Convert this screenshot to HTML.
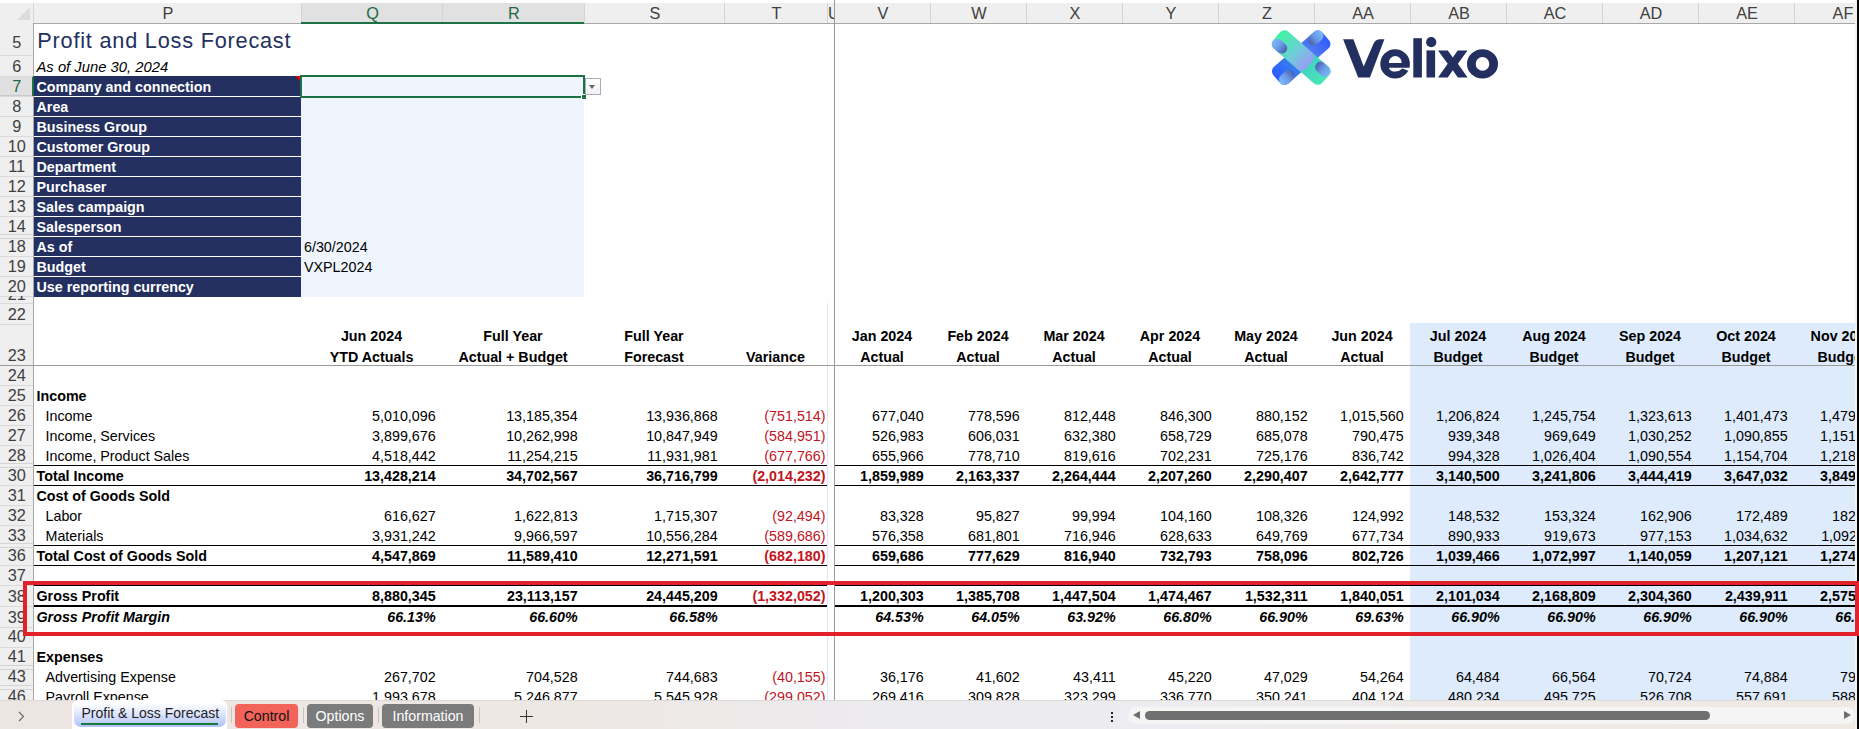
<!DOCTYPE html>
<html><head><meta charset="utf-8"><style>
html,body{margin:0;padding:0;}
body{width:1859px;height:729px;position:relative;overflow:hidden;background:#fff;font-family:"Liberation Sans", sans-serif;}
div,span,svg{position:absolute;}
span{line-height:1;white-space:nowrap;}
</style></head><body>
<div id="sheet" style="left:0;top:0;width:1855px;height:700px;overflow:hidden;">
<div style="left:1410px;top:323px;width:480px;height:377px;background:#DDEBFC"></div>
<div style="left:34px;top:76px;width:267px;height:221px;background:#243060"></div>
<div style="left:301px;top:76px;width:283px;height:221px;background:#EEF5FD"></div>
<div style="left:34px;top:96px;width:267px;height:1px;background:#FFFFFF"></div>
<div style="left:34px;top:116px;width:267px;height:1px;background:#FFFFFF"></div>
<div style="left:34px;top:136px;width:267px;height:1px;background:#FFFFFF"></div>
<div style="left:34px;top:156px;width:267px;height:1px;background:#FFFFFF"></div>
<div style="left:34px;top:176px;width:267px;height:1px;background:#FFFFFF"></div>
<div style="left:34px;top:196px;width:267px;height:1px;background:#FFFFFF"></div>
<div style="left:34px;top:216px;width:267px;height:1px;background:#FFFFFF"></div>
<div style="left:34px;top:236px;width:267px;height:1px;background:#FFFFFF"></div>
<div style="left:34px;top:256px;width:267px;height:1px;background:#FFFFFF"></div>
<div style="left:34px;top:276px;width:267px;height:1px;background:#FFFFFF"></div>
<span style="left:37.30px;top:30.43px;font-size:21.7px;color:#23305F;letter-spacing:0.79px">Profit and Loss Forecast</span>
<span style="left:36.50px;top:59.67px;font-size:14.8px;font-style:italic;color:#000">As of June 30, 2024</span>
<span style="left:36.50px;top:80.00px;font-size:14.3px;font-weight:bold;color:#fff">Company and connection</span>
<span style="left:36.50px;top:100.00px;font-size:14.3px;font-weight:bold;color:#fff">Area</span>
<span style="left:36.50px;top:120.00px;font-size:14.3px;font-weight:bold;color:#fff">Business Group</span>
<span style="left:36.50px;top:140.00px;font-size:14.3px;font-weight:bold;color:#fff">Customer Group</span>
<span style="left:36.50px;top:160.00px;font-size:14.3px;font-weight:bold;color:#fff">Department</span>
<span style="left:36.50px;top:180.00px;font-size:14.3px;font-weight:bold;color:#fff">Purchaser</span>
<span style="left:36.50px;top:200.00px;font-size:14.3px;font-weight:bold;color:#fff">Sales campaign</span>
<span style="left:36.50px;top:220.00px;font-size:14.3px;font-weight:bold;color:#fff">Salesperson</span>
<span style="left:36.50px;top:240.00px;font-size:14.3px;font-weight:bold;color:#fff">As of</span>
<span style="left:36.50px;top:260.00px;font-size:14.3px;font-weight:bold;color:#fff">Budget</span>
<span style="left:36.50px;top:280.00px;font-size:14.3px;font-weight:bold;color:#fff">Use reporting currency</span>
<span style="left:304.00px;top:240.10px;font-size:14.3px;color:#000">6/30/2024</span>
<span style="left:304.00px;top:260.10px;font-size:14.3px;color:#000">VXPL2024</span>
<div style="left:295px;top:76px;width:0;height:0;border-top:6px solid #E00000;border-left:6px solid transparent;"></div>
<div style="left:300px;top:75px;width:284.5px;height:23px;border:2px solid #1E7145;box-sizing:border-box;background:transparent"></div>
<div style="left:580.5px;top:93.5px;width:6.5px;height:6px;background:#1E7145;border:1px solid #fff;box-sizing:border-box"></div>
<div style="left:584.5px;top:78px;width:16.5px;height:17px;background:linear-gradient(#FFFFFF,#F0F1F4);border:1px solid #A9ABB5;box-sizing:border-box"></div>
<div style="left:589px;top:85px;width:0;height:0;border-top:4px solid #666;border-left:3.8px solid transparent;border-right:3.8px solid transparent;"></div>
<span style="left:171.50px;width:400px;text-align:center;top:328.60px;font-size:14.3px;font-weight:bold;color:#000">Jun 2024</span>
<span style="left:171.50px;width:400px;text-align:center;top:349.50px;font-size:14.3px;font-weight:bold;color:#000">YTD Actuals</span>
<span style="left:313.00px;width:400px;text-align:center;top:328.60px;font-size:14.3px;font-weight:bold;color:#000">Full Year</span>
<span style="left:313.00px;width:400px;text-align:center;top:349.50px;font-size:14.3px;font-weight:bold;color:#000">Actual + Budget</span>
<span style="left:454.00px;width:400px;text-align:center;top:328.60px;font-size:14.3px;font-weight:bold;color:#000">Full Year</span>
<span style="left:454.00px;width:400px;text-align:center;top:349.50px;font-size:14.3px;font-weight:bold;color:#000">Forecast</span>
<span style="left:575.50px;width:400px;text-align:center;top:349.50px;font-size:14.3px;font-weight:bold;color:#000">Variance</span>
<span style="left:682.00px;width:400px;text-align:center;top:328.60px;font-size:14.3px;font-weight:bold;color:#000">Jan 2024</span>
<span style="left:682.00px;width:400px;text-align:center;top:349.50px;font-size:14.3px;font-weight:bold;color:#000">Actual</span>
<span style="left:778.00px;width:400px;text-align:center;top:328.60px;font-size:14.3px;font-weight:bold;color:#000">Feb 2024</span>
<span style="left:778.00px;width:400px;text-align:center;top:349.50px;font-size:14.3px;font-weight:bold;color:#000">Actual</span>
<span style="left:874.00px;width:400px;text-align:center;top:328.60px;font-size:14.3px;font-weight:bold;color:#000">Mar 2024</span>
<span style="left:874.00px;width:400px;text-align:center;top:349.50px;font-size:14.3px;font-weight:bold;color:#000">Actual</span>
<span style="left:970.00px;width:400px;text-align:center;top:328.60px;font-size:14.3px;font-weight:bold;color:#000">Apr 2024</span>
<span style="left:970.00px;width:400px;text-align:center;top:349.50px;font-size:14.3px;font-weight:bold;color:#000">Actual</span>
<span style="left:1066.00px;width:400px;text-align:center;top:328.60px;font-size:14.3px;font-weight:bold;color:#000">May 2024</span>
<span style="left:1066.00px;width:400px;text-align:center;top:349.50px;font-size:14.3px;font-weight:bold;color:#000">Actual</span>
<span style="left:1162.00px;width:400px;text-align:center;top:328.60px;font-size:14.3px;font-weight:bold;color:#000">Jun 2024</span>
<span style="left:1162.00px;width:400px;text-align:center;top:349.50px;font-size:14.3px;font-weight:bold;color:#000">Actual</span>
<span style="left:1258.00px;width:400px;text-align:center;top:328.60px;font-size:14.3px;font-weight:bold;color:#000">Jul 2024</span>
<span style="left:1258.00px;width:400px;text-align:center;top:349.50px;font-size:14.3px;font-weight:bold;color:#000">Budget</span>
<span style="left:1354.00px;width:400px;text-align:center;top:328.60px;font-size:14.3px;font-weight:bold;color:#000">Aug 2024</span>
<span style="left:1354.00px;width:400px;text-align:center;top:349.50px;font-size:14.3px;font-weight:bold;color:#000">Budget</span>
<span style="left:1450.00px;width:400px;text-align:center;top:328.60px;font-size:14.3px;font-weight:bold;color:#000">Sep 2024</span>
<span style="left:1450.00px;width:400px;text-align:center;top:349.50px;font-size:14.3px;font-weight:bold;color:#000">Budget</span>
<span style="left:1546.00px;width:400px;text-align:center;top:328.60px;font-size:14.3px;font-weight:bold;color:#000">Oct 2024</span>
<span style="left:1546.00px;width:400px;text-align:center;top:349.50px;font-size:14.3px;font-weight:bold;color:#000">Budget</span>
<span style="left:1642.00px;width:400px;text-align:center;top:328.60px;font-size:14.3px;font-weight:bold;color:#000">Nov 2024</span>
<span style="left:1642.00px;width:400px;text-align:center;top:349.50px;font-size:14.3px;font-weight:bold;color:#000">Budget</span>
<span style="left:36.50px;top:388.70px;font-size:14.3px;color:#000;font-weight:bold;">Income</span>
<span style="left:45.50px;top:408.70px;font-size:14.3px;color:#000;">Income</span>
<span style="left:45.50px;top:428.70px;font-size:14.3px;color:#000;">Income, Services</span>
<span style="left:45.50px;top:448.70px;font-size:14.3px;color:#000;">Income, Product Sales</span>
<span style="left:36.50px;top:468.70px;font-size:14.3px;color:#000;font-weight:bold;">Total Income</span>
<span style="left:36.50px;top:488.70px;font-size:14.3px;color:#000;font-weight:bold;">Cost of Goods Sold</span>
<span style="left:45.50px;top:508.70px;font-size:14.3px;color:#000;">Labor</span>
<span style="left:45.50px;top:528.70px;font-size:14.3px;color:#000;">Materials</span>
<span style="left:36.50px;top:548.70px;font-size:14.3px;color:#000;font-weight:bold;">Total Cost of Goods Sold</span>
<span style="left:36.50px;top:588.70px;font-size:14.3px;color:#000;font-weight:bold;">Gross Profit</span>
<span style="left:36.50px;top:609.70px;font-size:14.3px;color:#000;font-weight:bold;font-style:italic;">Gross Profit Margin</span>
<span style="left:36.50px;top:649.80px;font-size:14.3px;color:#000;font-weight:bold;">Expenses</span>
<span style="left:45.50px;top:669.80px;font-size:14.3px;color:#000;">Advertising Expense</span>
<span style="left:45.50px;top:689.80px;font-size:14.3px;color:#000;">Payroll Expense</span>
<span style="right:1419.30px;top:408.70px;font-size:14.3px;color:#000;">5,010,096</span>
<span style="right:1277.30px;top:408.70px;font-size:14.3px;color:#000;">13,185,354</span>
<span style="right:1137.30px;top:408.70px;font-size:14.3px;color:#000;">13,936,868</span>
<span style="right:1029.50px;top:408.70px;font-size:14.3px;color:#C3141E;">(751,514)</span>
<span style="right:931.30px;top:408.70px;font-size:14.3px;color:#000;">677,040</span>
<span style="right:835.30px;top:408.70px;font-size:14.3px;color:#000;">778,596</span>
<span style="right:739.30px;top:408.70px;font-size:14.3px;color:#000;">812,448</span>
<span style="right:643.30px;top:408.70px;font-size:14.3px;color:#000;">846,300</span>
<span style="right:547.30px;top:408.70px;font-size:14.3px;color:#000;">880,152</span>
<span style="right:451.30px;top:408.70px;font-size:14.3px;color:#000;">1,015,560</span>
<span style="right:355.30px;top:408.70px;font-size:14.3px;color:#000;">1,206,824</span>
<span style="right:259.30px;top:408.70px;font-size:14.3px;color:#000;">1,245,754</span>
<span style="right:163.30px;top:408.70px;font-size:14.3px;color:#000;">1,323,613</span>
<span style="right:67.30px;top:408.70px;font-size:14.3px;color:#000;">1,401,473</span>
<span style="right:-28.70px;top:408.70px;font-size:14.3px;color:#000;">1,479,333</span>
<span style="right:1419.30px;top:428.70px;font-size:14.3px;color:#000;">3,899,676</span>
<span style="right:1277.30px;top:428.70px;font-size:14.3px;color:#000;">10,262,998</span>
<span style="right:1137.30px;top:428.70px;font-size:14.3px;color:#000;">10,847,949</span>
<span style="right:1029.50px;top:428.70px;font-size:14.3px;color:#C3141E;">(584,951)</span>
<span style="right:931.30px;top:428.70px;font-size:14.3px;color:#000;">526,983</span>
<span style="right:835.30px;top:428.70px;font-size:14.3px;color:#000;">606,031</span>
<span style="right:739.30px;top:428.70px;font-size:14.3px;color:#000;">632,380</span>
<span style="right:643.30px;top:428.70px;font-size:14.3px;color:#000;">658,729</span>
<span style="right:547.30px;top:428.70px;font-size:14.3px;color:#000;">685,078</span>
<span style="right:451.30px;top:428.70px;font-size:14.3px;color:#000;">790,475</span>
<span style="right:355.30px;top:428.70px;font-size:14.3px;color:#000;">939,348</span>
<span style="right:259.30px;top:428.70px;font-size:14.3px;color:#000;">969,649</span>
<span style="right:163.30px;top:428.70px;font-size:14.3px;color:#000;">1,030,252</span>
<span style="right:67.30px;top:428.70px;font-size:14.3px;color:#000;">1,090,855</span>
<span style="right:-28.70px;top:428.70px;font-size:14.3px;color:#000;">1,151,458</span>
<span style="right:1419.30px;top:448.70px;font-size:14.3px;color:#000;">4,518,442</span>
<span style="right:1277.30px;top:448.70px;font-size:14.3px;color:#000;">11,254,215</span>
<span style="right:1137.30px;top:448.70px;font-size:14.3px;color:#000;">11,931,981</span>
<span style="right:1029.50px;top:448.70px;font-size:14.3px;color:#C3141E;">(677,766)</span>
<span style="right:931.30px;top:448.70px;font-size:14.3px;color:#000;">655,966</span>
<span style="right:835.30px;top:448.70px;font-size:14.3px;color:#000;">778,710</span>
<span style="right:739.30px;top:448.70px;font-size:14.3px;color:#000;">819,616</span>
<span style="right:643.30px;top:448.70px;font-size:14.3px;color:#000;">702,231</span>
<span style="right:547.30px;top:448.70px;font-size:14.3px;color:#000;">725,176</span>
<span style="right:451.30px;top:448.70px;font-size:14.3px;color:#000;">836,742</span>
<span style="right:355.30px;top:448.70px;font-size:14.3px;color:#000;">994,328</span>
<span style="right:259.30px;top:448.70px;font-size:14.3px;color:#000;">1,026,404</span>
<span style="right:163.30px;top:448.70px;font-size:14.3px;color:#000;">1,090,554</span>
<span style="right:67.30px;top:448.70px;font-size:14.3px;color:#000;">1,154,704</span>
<span style="right:-28.70px;top:448.70px;font-size:14.3px;color:#000;">1,218,854</span>
<span style="right:1419.30px;top:468.70px;font-size:14.3px;color:#000;font-weight:bold;">13,428,214</span>
<span style="right:1277.30px;top:468.70px;font-size:14.3px;color:#000;font-weight:bold;">34,702,567</span>
<span style="right:1137.30px;top:468.70px;font-size:14.3px;color:#000;font-weight:bold;">36,716,799</span>
<span style="right:1029.50px;top:468.70px;font-size:14.3px;color:#C3141E;font-weight:bold;">(2,014,232)</span>
<span style="right:931.30px;top:468.70px;font-size:14.3px;color:#000;font-weight:bold;">1,859,989</span>
<span style="right:835.30px;top:468.70px;font-size:14.3px;color:#000;font-weight:bold;">2,163,337</span>
<span style="right:739.30px;top:468.70px;font-size:14.3px;color:#000;font-weight:bold;">2,264,444</span>
<span style="right:643.30px;top:468.70px;font-size:14.3px;color:#000;font-weight:bold;">2,207,260</span>
<span style="right:547.30px;top:468.70px;font-size:14.3px;color:#000;font-weight:bold;">2,290,407</span>
<span style="right:451.30px;top:468.70px;font-size:14.3px;color:#000;font-weight:bold;">2,642,777</span>
<span style="right:355.30px;top:468.70px;font-size:14.3px;color:#000;font-weight:bold;">3,140,500</span>
<span style="right:259.30px;top:468.70px;font-size:14.3px;color:#000;font-weight:bold;">3,241,806</span>
<span style="right:163.30px;top:468.70px;font-size:14.3px;color:#000;font-weight:bold;">3,444,419</span>
<span style="right:67.30px;top:468.70px;font-size:14.3px;color:#000;font-weight:bold;">3,647,032</span>
<span style="right:-28.70px;top:468.70px;font-size:14.3px;color:#000;font-weight:bold;">3,849,645</span>
<span style="right:1419.30px;top:508.70px;font-size:14.3px;color:#000;">616,627</span>
<span style="right:1277.30px;top:508.70px;font-size:14.3px;color:#000;">1,622,813</span>
<span style="right:1137.30px;top:508.70px;font-size:14.3px;color:#000;">1,715,307</span>
<span style="right:1029.50px;top:508.70px;font-size:14.3px;color:#C3141E;">(92,494)</span>
<span style="right:931.30px;top:508.70px;font-size:14.3px;color:#000;">83,328</span>
<span style="right:835.30px;top:508.70px;font-size:14.3px;color:#000;">95,827</span>
<span style="right:739.30px;top:508.70px;font-size:14.3px;color:#000;">99,994</span>
<span style="right:643.30px;top:508.70px;font-size:14.3px;color:#000;">104,160</span>
<span style="right:547.30px;top:508.70px;font-size:14.3px;color:#000;">108,326</span>
<span style="right:451.30px;top:508.70px;font-size:14.3px;color:#000;">124,992</span>
<span style="right:355.30px;top:508.70px;font-size:14.3px;color:#000;">148,532</span>
<span style="right:259.30px;top:508.70px;font-size:14.3px;color:#000;">153,324</span>
<span style="right:163.30px;top:508.70px;font-size:14.3px;color:#000;">162,906</span>
<span style="right:67.30px;top:508.70px;font-size:14.3px;color:#000;">172,489</span>
<span style="right:-28.70px;top:508.70px;font-size:14.3px;color:#000;">182,072</span>
<span style="right:1419.30px;top:528.70px;font-size:14.3px;color:#000;">3,931,242</span>
<span style="right:1277.30px;top:528.70px;font-size:14.3px;color:#000;">9,966,597</span>
<span style="right:1137.30px;top:528.70px;font-size:14.3px;color:#000;">10,556,284</span>
<span style="right:1029.50px;top:528.70px;font-size:14.3px;color:#C3141E;">(589,686)</span>
<span style="right:931.30px;top:528.70px;font-size:14.3px;color:#000;">576,358</span>
<span style="right:835.30px;top:528.70px;font-size:14.3px;color:#000;">681,801</span>
<span style="right:739.30px;top:528.70px;font-size:14.3px;color:#000;">716,946</span>
<span style="right:643.30px;top:528.70px;font-size:14.3px;color:#000;">628,633</span>
<span style="right:547.30px;top:528.70px;font-size:14.3px;color:#000;">649,769</span>
<span style="right:451.30px;top:528.70px;font-size:14.3px;color:#000;">677,734</span>
<span style="right:355.30px;top:528.70px;font-size:14.3px;color:#000;">890,933</span>
<span style="right:259.30px;top:528.70px;font-size:14.3px;color:#000;">919,673</span>
<span style="right:163.30px;top:528.70px;font-size:14.3px;color:#000;">977,153</span>
<span style="right:67.30px;top:528.70px;font-size:14.3px;color:#000;">1,034,632</span>
<span style="right:-28.70px;top:528.70px;font-size:14.3px;color:#000;">1,092,112</span>
<span style="right:1419.30px;top:548.70px;font-size:14.3px;color:#000;font-weight:bold;">4,547,869</span>
<span style="right:1277.30px;top:548.70px;font-size:14.3px;color:#000;font-weight:bold;">11,589,410</span>
<span style="right:1137.30px;top:548.70px;font-size:14.3px;color:#000;font-weight:bold;">12,271,591</span>
<span style="right:1029.50px;top:548.70px;font-size:14.3px;color:#C3141E;font-weight:bold;">(682,180)</span>
<span style="right:931.30px;top:548.70px;font-size:14.3px;color:#000;font-weight:bold;">659,686</span>
<span style="right:835.30px;top:548.70px;font-size:14.3px;color:#000;font-weight:bold;">777,629</span>
<span style="right:739.30px;top:548.70px;font-size:14.3px;color:#000;font-weight:bold;">816,940</span>
<span style="right:643.30px;top:548.70px;font-size:14.3px;color:#000;font-weight:bold;">732,793</span>
<span style="right:547.30px;top:548.70px;font-size:14.3px;color:#000;font-weight:bold;">758,096</span>
<span style="right:451.30px;top:548.70px;font-size:14.3px;color:#000;font-weight:bold;">802,726</span>
<span style="right:355.30px;top:548.70px;font-size:14.3px;color:#000;font-weight:bold;">1,039,466</span>
<span style="right:259.30px;top:548.70px;font-size:14.3px;color:#000;font-weight:bold;">1,072,997</span>
<span style="right:163.30px;top:548.70px;font-size:14.3px;color:#000;font-weight:bold;">1,140,059</span>
<span style="right:67.30px;top:548.70px;font-size:14.3px;color:#000;font-weight:bold;">1,207,121</span>
<span style="right:-28.70px;top:548.70px;font-size:14.3px;color:#000;font-weight:bold;">1,274,184</span>
<span style="right:1419.30px;top:588.70px;font-size:14.3px;color:#000;font-weight:bold;">8,880,345</span>
<span style="right:1277.30px;top:588.70px;font-size:14.3px;color:#000;font-weight:bold;">23,113,157</span>
<span style="right:1137.30px;top:588.70px;font-size:14.3px;color:#000;font-weight:bold;">24,445,209</span>
<span style="right:1029.50px;top:588.70px;font-size:14.3px;color:#C3141E;font-weight:bold;">(1,332,052)</span>
<span style="right:931.30px;top:588.70px;font-size:14.3px;color:#000;font-weight:bold;">1,200,303</span>
<span style="right:835.30px;top:588.70px;font-size:14.3px;color:#000;font-weight:bold;">1,385,708</span>
<span style="right:739.30px;top:588.70px;font-size:14.3px;color:#000;font-weight:bold;">1,447,504</span>
<span style="right:643.30px;top:588.70px;font-size:14.3px;color:#000;font-weight:bold;">1,474,467</span>
<span style="right:547.30px;top:588.70px;font-size:14.3px;color:#000;font-weight:bold;">1,532,311</span>
<span style="right:451.30px;top:588.70px;font-size:14.3px;color:#000;font-weight:bold;">1,840,051</span>
<span style="right:355.30px;top:588.70px;font-size:14.3px;color:#000;font-weight:bold;">2,101,034</span>
<span style="right:259.30px;top:588.70px;font-size:14.3px;color:#000;font-weight:bold;">2,168,809</span>
<span style="right:163.30px;top:588.70px;font-size:14.3px;color:#000;font-weight:bold;">2,304,360</span>
<span style="right:67.30px;top:588.70px;font-size:14.3px;color:#000;font-weight:bold;">2,439,911</span>
<span style="right:-28.70px;top:588.70px;font-size:14.3px;color:#000;font-weight:bold;">2,575,461</span>
<span style="right:1419.30px;top:609.70px;font-size:14.3px;color:#000;font-weight:bold;font-style:italic;">66.13%</span>
<span style="right:1277.30px;top:609.70px;font-size:14.3px;color:#000;font-weight:bold;font-style:italic;">66.60%</span>
<span style="right:1137.30px;top:609.70px;font-size:14.3px;color:#000;font-weight:bold;font-style:italic;">66.58%</span>
<span style="right:931.30px;top:609.70px;font-size:14.3px;color:#000;font-weight:bold;font-style:italic;">64.53%</span>
<span style="right:835.30px;top:609.70px;font-size:14.3px;color:#000;font-weight:bold;font-style:italic;">64.05%</span>
<span style="right:739.30px;top:609.70px;font-size:14.3px;color:#000;font-weight:bold;font-style:italic;">63.92%</span>
<span style="right:643.30px;top:609.70px;font-size:14.3px;color:#000;font-weight:bold;font-style:italic;">66.80%</span>
<span style="right:547.30px;top:609.70px;font-size:14.3px;color:#000;font-weight:bold;font-style:italic;">66.90%</span>
<span style="right:451.30px;top:609.70px;font-size:14.3px;color:#000;font-weight:bold;font-style:italic;">69.63%</span>
<span style="right:355.30px;top:609.70px;font-size:14.3px;color:#000;font-weight:bold;font-style:italic;">66.90%</span>
<span style="right:259.30px;top:609.70px;font-size:14.3px;color:#000;font-weight:bold;font-style:italic;">66.90%</span>
<span style="right:163.30px;top:609.70px;font-size:14.3px;color:#000;font-weight:bold;font-style:italic;">66.90%</span>
<span style="right:67.30px;top:609.70px;font-size:14.3px;color:#000;font-weight:bold;font-style:italic;">66.90%</span>
<span style="right:-28.70px;top:609.70px;font-size:14.3px;color:#000;font-weight:bold;font-style:italic;">66.90%</span>
<span style="right:1419.30px;top:669.80px;font-size:14.3px;color:#000;">267,702</span>
<span style="right:1277.30px;top:669.80px;font-size:14.3px;color:#000;">704,528</span>
<span style="right:1137.30px;top:669.80px;font-size:14.3px;color:#000;">744,683</span>
<span style="right:1029.50px;top:669.80px;font-size:14.3px;color:#C3141E;">(40,155)</span>
<span style="right:931.30px;top:669.80px;font-size:14.3px;color:#000;">36,176</span>
<span style="right:835.30px;top:669.80px;font-size:14.3px;color:#000;">41,602</span>
<span style="right:739.30px;top:669.80px;font-size:14.3px;color:#000;">43,411</span>
<span style="right:643.30px;top:669.80px;font-size:14.3px;color:#000;">45,220</span>
<span style="right:547.30px;top:669.80px;font-size:14.3px;color:#000;">47,029</span>
<span style="right:451.30px;top:669.80px;font-size:14.3px;color:#000;">54,264</span>
<span style="right:355.30px;top:669.80px;font-size:14.3px;color:#000;">64,484</span>
<span style="right:259.30px;top:669.80px;font-size:14.3px;color:#000;">66,564</span>
<span style="right:163.30px;top:669.80px;font-size:14.3px;color:#000;">70,724</span>
<span style="right:67.30px;top:669.80px;font-size:14.3px;color:#000;">74,884</span>
<span style="right:-28.70px;top:669.80px;font-size:14.3px;color:#000;">79,044</span>
<span style="right:1419.30px;top:689.80px;font-size:14.3px;color:#000;">1,993,678</span>
<span style="right:1277.30px;top:689.80px;font-size:14.3px;color:#000;">5,246,877</span>
<span style="right:1137.30px;top:689.80px;font-size:14.3px;color:#000;">5,545,928</span>
<span style="right:1029.50px;top:689.80px;font-size:14.3px;color:#C3141E;">(299,052)</span>
<span style="right:931.30px;top:689.80px;font-size:14.3px;color:#000;">269,416</span>
<span style="right:835.30px;top:689.80px;font-size:14.3px;color:#000;">309,828</span>
<span style="right:739.30px;top:689.80px;font-size:14.3px;color:#000;">323,299</span>
<span style="right:643.30px;top:689.80px;font-size:14.3px;color:#000;">336,770</span>
<span style="right:547.30px;top:689.80px;font-size:14.3px;color:#000;">350,241</span>
<span style="right:451.30px;top:689.80px;font-size:14.3px;color:#000;">404,124</span>
<span style="right:355.30px;top:689.80px;font-size:14.3px;color:#000;">480,234</span>
<span style="right:259.30px;top:689.80px;font-size:14.3px;color:#000;">495,725</span>
<span style="right:163.30px;top:689.80px;font-size:14.3px;color:#000;">526,708</span>
<span style="right:67.30px;top:689.80px;font-size:14.3px;color:#000;">557,691</span>
<span style="right:-28.70px;top:689.80px;font-size:14.3px;color:#000;">588,674</span>
<div style="left:34px;top:465px;width:793px;height:1px;background:#000"></div>
<div style="left:835px;top:465px;width:1055px;height:1px;background:#000"></div>
<div style="left:34px;top:485px;width:793px;height:1px;background:#000"></div>
<div style="left:835px;top:485px;width:1055px;height:1px;background:#000"></div>
<div style="left:34px;top:545px;width:793px;height:1px;background:#000"></div>
<div style="left:835px;top:545px;width:1055px;height:1px;background:#000"></div>
<div style="left:34px;top:565px;width:793px;height:1px;background:#000"></div>
<div style="left:835px;top:565px;width:1055px;height:1px;background:#000"></div>
<div style="left:34px;top:585px;width:793px;height:1px;background:#000"></div>
<div style="left:835px;top:585px;width:1055px;height:1px;background:#000"></div>
<div style="left:34px;top:605px;width:793px;height:2px;background:#000"></div>
<div style="left:835px;top:605px;width:1055px;height:2px;background:#000"></div>
<div style="left:827px;top:303px;width:1px;height:397px;background:#DCE8FA"></div>
</div>
<div style="left:834px;top:0px;width:1px;height:700px;background:#9B9B9B"></div>
<div style="left:0px;top:365px;width:1855px;height:1px;background:#9B9B9B"></div>
<div style="left:0px;top:0px;width:1855px;height:3px;background:#fff"></div>
<div style="left:0px;top:3px;width:1855px;height:20px;background:#EFEFEF"></div>
<div style="left:0px;top:23px;width:1855px;height:1px;background:#A8A8A8"></div>
<div style="left:17px;top:7px;width:0;height:0;border-bottom:13px solid #DCDCDC;border-left:13px solid transparent;"></div>
<div style="left:301px;top:3px;width:141px;height:20px;background:#E1E1E1"></div>
<div style="left:442px;top:3px;width:142px;height:20px;background:#E1E1E1"></div>
<div style="left:301px;top:3px;width:1px;height:20px;background:#D4D4D4"></div>
<div style="left:442px;top:3px;width:1px;height:20px;background:#D4D4D4"></div>
<div style="left:584px;top:3px;width:1px;height:20px;background:#D4D4D4"></div>
<div style="left:724px;top:3px;width:1px;height:20px;background:#D4D4D4"></div>
<div style="left:827px;top:3px;width:1px;height:20px;background:#D4D4D4"></div>
<div style="left:834px;top:3px;width:1px;height:20px;background:#D4D4D4"></div>
<div style="left:930px;top:3px;width:1px;height:20px;background:#D4D4D4"></div>
<div style="left:1026px;top:3px;width:1px;height:20px;background:#D4D4D4"></div>
<div style="left:1122px;top:3px;width:1px;height:20px;background:#D4D4D4"></div>
<div style="left:1218px;top:3px;width:1px;height:20px;background:#D4D4D4"></div>
<div style="left:1314px;top:3px;width:1px;height:20px;background:#D4D4D4"></div>
<div style="left:1410px;top:3px;width:1px;height:20px;background:#D4D4D4"></div>
<div style="left:1506px;top:3px;width:1px;height:20px;background:#D4D4D4"></div>
<div style="left:1602px;top:3px;width:1px;height:20px;background:#D4D4D4"></div>
<div style="left:1698px;top:3px;width:1px;height:20px;background:#D4D4D4"></div>
<div style="left:1794px;top:3px;width:1px;height:20px;background:#D4D4D4"></div>
<div style="left:1890px;top:3px;width:1px;height:20px;background:#D4D4D4"></div>
<div style="left:0;top:0;width:1855px;height:24px;overflow:hidden;">
<span style="left:-32.00px;width:400px;text-align:center;top:5.10px;font-size:16.3px;color:#404040">P</span>
<span style="left:172.50px;width:400px;text-align:center;top:5.10px;font-size:16.3px;color:#1F6B45">Q</span>
<span style="left:314.00px;width:400px;text-align:center;top:5.10px;font-size:16.3px;color:#1F6B45">R</span>
<span style="left:455.00px;width:400px;text-align:center;top:5.10px;font-size:16.3px;color:#404040">S</span>
<span style="left:576.50px;width:400px;text-align:center;top:5.10px;font-size:16.3px;color:#404040">T</span>
<div style="left:827px;top:0;width:7px;height:24px;overflow:hidden">
<span style="left:-193.00px;width:400px;text-align:center;top:5.10px;font-size:16.3px;color:#404040">U</span>
</div>
<span style="left:683.00px;width:400px;text-align:center;top:5.10px;font-size:16.3px;color:#404040">V</span>
<span style="left:779.00px;width:400px;text-align:center;top:5.10px;font-size:16.3px;color:#404040">W</span>
<span style="left:875.00px;width:400px;text-align:center;top:5.10px;font-size:16.3px;color:#404040">X</span>
<span style="left:971.00px;width:400px;text-align:center;top:5.10px;font-size:16.3px;color:#404040">Y</span>
<span style="left:1067.00px;width:400px;text-align:center;top:5.10px;font-size:16.3px;color:#404040">Z</span>
<span style="left:1163.00px;width:400px;text-align:center;top:5.10px;font-size:16.3px;color:#404040">AA</span>
<span style="left:1259.00px;width:400px;text-align:center;top:5.10px;font-size:16.3px;color:#404040">AB</span>
<span style="left:1355.00px;width:400px;text-align:center;top:5.10px;font-size:16.3px;color:#404040">AC</span>
<span style="left:1451.00px;width:400px;text-align:center;top:5.10px;font-size:16.3px;color:#404040">AD</span>
<span style="left:1547.00px;width:400px;text-align:center;top:5.10px;font-size:16.3px;color:#404040">AE</span>
<span style="left:1643.00px;width:400px;text-align:center;top:5.10px;font-size:16.3px;color:#404040">AF</span>
</div>
<div style="left:301px;top:22px;width:283px;height:2px;background:#1E7145"></div>
<div style="left:33px;top:3px;width:1px;height:20px;background:#D6D6D6"></div>
<div style="left:834px;top:0px;width:1px;height:24px;background:#9B9B9B"></div>
<div style="left:0px;top:23px;width:33px;height:677px;background:#EFEFEF"></div>
<div style="left:33px;top:23px;width:1px;height:677px;background:#A8A8A8"></div>
<div style="left:0px;top:76px;width:33px;height:20px;background:#E0E0E0;border-top:1px solid #CACACA;border-bottom:1px solid #CACACA;box-sizing:border-box"></div>
<div style="left:32px;top:76px;width:2px;height:20px;background:#1E7145"></div>
<div style="left:0;top:24px;width:33px;height:676px;overflow:hidden;">
<div style="left:0;top:31px;width:33px;height:1px;background:#DADADA"></div>
<span style="left:-183.30px;width:400px;text-align:center;top:9.80px;font-size:16.3px;color:#404040">5</span>
<div style="left:0;top:52px;width:33px;height:1px;background:#DADADA"></div>
<span style="left:-183.30px;width:400px;text-align:center;top:34.20px;font-size:16.3px;color:#404040">6</span>
<div style="left:0;top:72px;width:33px;height:1px;background:#DADADA"></div>
<span style="left:-183.30px;width:400px;text-align:center;top:54.20px;font-size:16.3px;color:#1F6B45">7</span>
<div style="left:0;top:92px;width:33px;height:1px;background:#DADADA"></div>
<span style="left:-183.30px;width:400px;text-align:center;top:74.20px;font-size:16.3px;color:#404040">8</span>
<div style="left:0;top:112px;width:33px;height:1px;background:#DADADA"></div>
<span style="left:-183.30px;width:400px;text-align:center;top:94.20px;font-size:16.3px;color:#404040">9</span>
<div style="left:0;top:132px;width:33px;height:1px;background:#DADADA"></div>
<span style="left:-183.30px;width:400px;text-align:center;top:114.20px;font-size:16.3px;color:#404040">10</span>
<div style="left:0;top:152px;width:33px;height:1px;background:#DADADA"></div>
<span style="left:-183.30px;width:400px;text-align:center;top:134.20px;font-size:16.3px;color:#404040">11</span>
<div style="left:0;top:172px;width:33px;height:1px;background:#DADADA"></div>
<span style="left:-183.30px;width:400px;text-align:center;top:154.20px;font-size:16.3px;color:#404040">12</span>
<div style="left:0;top:192px;width:33px;height:1px;background:#DADADA"></div>
<span style="left:-183.30px;width:400px;text-align:center;top:174.20px;font-size:16.3px;color:#404040">13</span>
<span style="left:-183.30px;width:400px;text-align:center;top:194.20px;font-size:16.3px;color:#404040">14</span>
<div style="left:0;top:232px;width:33px;height:1px;background:#DADADA"></div>
<span style="left:-183.30px;width:400px;text-align:center;top:214.20px;font-size:16.3px;color:#404040">18</span>
<div style="left:0;top:252px;width:33px;height:1px;background:#DADADA"></div>
<span style="left:-183.30px;width:400px;text-align:center;top:234.20px;font-size:16.3px;color:#404040">19</span>
<div style="left:0;top:272px;width:33px;height:1px;background:#DADADA"></div>
<span style="left:-183.30px;width:400px;text-align:center;top:254.20px;font-size:16.3px;color:#404040">20</span>
<div style="left:0;top:279px;width:33px;height:1px;background:#DADADA"></div>
<div style="left:0;top:272px;width:33px;height:7px;overflow:hidden">
<span style="left:-183.30px;width:400px;text-align:center;top:-10.50px;font-size:16.3px;color:#404040">21</span>
</div>
<div style="left:0;top:300px;width:33px;height:1px;background:#DADADA"></div>
<span style="left:-183.30px;width:400px;text-align:center;top:281.70px;font-size:16.3px;color:#404040">22</span>
<div style="left:0;top:341px;width:33px;height:1px;background:#DADADA"></div>
<span style="left:-183.30px;width:400px;text-align:center;top:323.20px;font-size:16.3px;color:#404040">23</span>
<div style="left:0;top:361px;width:33px;height:1px;background:#DADADA"></div>
<span style="left:-183.30px;width:400px;text-align:center;top:343.20px;font-size:16.3px;color:#404040">24</span>
<div style="left:0;top:381px;width:33px;height:1px;background:#DADADA"></div>
<span style="left:-183.30px;width:400px;text-align:center;top:363.20px;font-size:16.3px;color:#404040">25</span>
<div style="left:0;top:401px;width:33px;height:1px;background:#DADADA"></div>
<span style="left:-183.30px;width:400px;text-align:center;top:383.20px;font-size:16.3px;color:#404040">26</span>
<div style="left:0;top:421px;width:33px;height:1px;background:#DADADA"></div>
<span style="left:-183.30px;width:400px;text-align:center;top:403.20px;font-size:16.3px;color:#404040">27</span>
<span style="left:-183.30px;width:400px;text-align:center;top:423.20px;font-size:16.3px;color:#404040">28</span>
<div style="left:0;top:461px;width:33px;height:1px;background:#DADADA"></div>
<span style="left:-183.30px;width:400px;text-align:center;top:443.20px;font-size:16.3px;color:#404040">30</span>
<div style="left:0;top:481px;width:33px;height:1px;background:#DADADA"></div>
<span style="left:-183.30px;width:400px;text-align:center;top:463.20px;font-size:16.3px;color:#404040">31</span>
<div style="left:0;top:501px;width:33px;height:1px;background:#DADADA"></div>
<span style="left:-183.30px;width:400px;text-align:center;top:483.20px;font-size:16.3px;color:#404040">32</span>
<span style="left:-183.30px;width:400px;text-align:center;top:503.20px;font-size:16.3px;color:#404040">33</span>
<div style="left:0;top:541px;width:33px;height:1px;background:#DADADA"></div>
<span style="left:-183.30px;width:400px;text-align:center;top:523.20px;font-size:16.3px;color:#404040">36</span>
<div style="left:0;top:561px;width:33px;height:1px;background:#DADADA"></div>
<span style="left:-183.30px;width:400px;text-align:center;top:543.20px;font-size:16.3px;color:#404040">37</span>
<div style="left:0;top:582px;width:33px;height:1px;background:#DADADA"></div>
<span style="left:-183.30px;width:400px;text-align:center;top:564.20px;font-size:16.3px;color:#404040">38</span>
<div style="left:0;top:603px;width:33px;height:1px;background:#DADADA"></div>
<span style="left:-183.30px;width:400px;text-align:center;top:585.20px;font-size:16.3px;color:#404040">39</span>
<div style="left:0;top:623px;width:33px;height:1px;background:#DADADA"></div>
<span style="left:-183.30px;width:400px;text-align:center;top:604.20px;font-size:16.3px;color:#404040">40</span>
<span style="left:-183.30px;width:400px;text-align:center;top:624.20px;font-size:16.3px;color:#404040">41</span>
<span style="left:-183.30px;width:400px;text-align:center;top:644.20px;font-size:16.3px;color:#404040">43</span>
<div style="left:0;top:683px;width:33px;height:1px;background:#DADADA"></div>
<span style="left:-183.30px;width:400px;text-align:center;top:664.20px;font-size:16.3px;color:#404040">46</span>
<div style="left:0;top:209.5px;width:33px;height:1px;background:#D4D4D4"></div>
<div style="left:0;top:213.5px;width:33px;height:1px;background:#D4D4D4"></div>
<div style="left:0;top:438.5px;width:33px;height:1px;background:#D4D4D4"></div>
<div style="left:0;top:442.5px;width:33px;height:1px;background:#D4D4D4"></div>
<div style="left:0;top:518.5px;width:33px;height:1px;background:#D4D4D4"></div>
<div style="left:0;top:522.5px;width:33px;height:1px;background:#D4D4D4"></div>
<div style="left:0;top:640.5px;width:33px;height:1px;background:#D4D4D4"></div>
<div style="left:0;top:644.5px;width:33px;height:1px;background:#D4D4D4"></div>
<div style="left:0;top:660.5px;width:33px;height:1px;background:#D4D4D4"></div>
<div style="left:0;top:664.5px;width:33px;height:1px;background:#D4D4D4"></div>
</div>
<div style="left:0px;top:365px;width:1855px;height:1px;background:#9B9B9B"></div>
<div style="left:0;top:700px;width:1859px;height:29px;background:linear-gradient(90deg,#ECE5E2 0%,#EEE8E4 30%,#ECEBF0 50%,#EDECF1 62%,#EFEAE6 80%,#EFE9E4 100%)"></div>
<div style="left:0px;top:700px;width:1855px;height:1px;background:#DCDAD8"></div>
<svg style="position:absolute;left:16px;top:710px" width="10" height="14" viewBox="0 0 10 14"><path d="M3 2 L7.5 6.5 L3 11" fill="none" stroke="#6A6A6A" stroke-width="1.2"/></svg>
<div style="left:72px;top:700px;width:155px;height:29px;background:#FFFFFF;border-radius:6px 6px 0 0"></div>
<div style="left:73.5px;top:702.5px;width:152px;height:24.5px;border-radius:0 0 7px 7px;background:linear-gradient(180deg,#FFFFFF 0%,#E2E9FC 40%,#AFC1F8 100%)"></div>
<span style="left:-49.70px;width:400px;text-align:center;top:705.95px;font-size:14px;color:#1E1E1E">Profit &amp; Loss Forecast</span>
<div style="left:81px;top:723px;width:137px;height:2px;background:#1A7A3C"></div>
<div style="left:230.5px;top:707px;width:1px;height:16px;background:#C8C4C2"></div>
<div style="left:302.5px;top:707px;width:1px;height:16px;background:#C8C4C2"></div>
<div style="left:377.5px;top:707px;width:1px;height:16px;background:#C8C4C2"></div>
<div style="left:478.5px;top:707px;width:1px;height:16px;background:#C8C4C2"></div>
<div style="left:235px;top:704px;width:63px;height:24px;border-radius:4px;background:#F2645A"></div>
<span style="left:66.50px;width:400px;text-align:center;top:708.68px;font-size:14.2px;color:#111">Control</span>
<div style="left:307px;top:704px;width:66px;height:24px;border-radius:4px;background:#7B7B7B"></div>
<span style="left:140.00px;width:400px;text-align:center;top:708.68px;font-size:14.2px;color:#fff">Options</span>
<div style="left:382px;top:704px;width:92px;height:24px;border-radius:4px;background:#7B7B7B"></div>
<span style="left:228.00px;width:400px;text-align:center;top:708.68px;font-size:14.2px;color:#fff">Information</span>
<div style="left:520px;top:715.5px;width:13px;height:1.2px;background:#333"></div>
<div style="left:525.9px;top:709.5px;width:1.2px;height:13px;background:#333"></div>
<div style="left:1111px;top:712px;width:2px;height:2px;background:#222"></div>
<div style="left:1111px;top:716px;width:2px;height:2px;background:#222"></div>
<div style="left:1111px;top:720px;width:2px;height:2px;background:#222"></div>
<div style="left:1128px;top:707px;width:727px;height:17px;border-radius:9px;background:#F5F5F5"></div>
<div style="left:1133px;top:711px;width:0;height:0;border-right:7px solid #6E6E6E;border-top:4.5px solid transparent;border-bottom:4.5px solid transparent"></div>
<div style="left:1844px;top:711px;width:0;height:0;border-left:7px solid #6E6E6E;border-top:4.5px solid transparent;border-bottom:4.5px solid transparent"></div>
<div style="left:1145px;top:710.7px;width:565px;height:9.5px;border-radius:5px;background:#707070"></div>
<div style="left:1855px;top:0px;width:2px;height:729px;background:#F4F1EE"></div>
<div style="left:1857px;top:0px;width:2px;height:729px;background:#000"></div>
<div style="left:23px;top:581px;width:1836px;height:55px;border:4px solid #E3212B;box-sizing:border-box"></div>
<svg style="position:absolute;left:1266px;top:26px" width="70" height="64" viewBox="0 0 70 64">
<defs>
<linearGradient id="gA" x1="0" y1="0" x2="1" y2="0"><stop offset="0" stop-color="#3EF3A0"/><stop offset="0.5" stop-color="#40C8C8"/><stop offset="1" stop-color="#4AE8B4"/></linearGradient>
<linearGradient id="gB" x1="0" y1="0" x2="1" y2="0"><stop offset="0" stop-color="#2E5AFF"/><stop offset="0.45" stop-color="#3A8CE8"/><stop offset="0.7" stop-color="#4F78F0"/><stop offset="1" stop-color="#2E5DFF"/></linearGradient>
<linearGradient id="gC" x1="0" y1="0" x2="1" y2="0"><stop offset="0" stop-color="#3EF5A0"/><stop offset="0.55" stop-color="#6CCFD6"/><stop offset="1" stop-color="#9A9CF6"/></linearGradient>
<linearGradient id="gF" x1="0" y1="0" x2="1" y2="0"><stop offset="0" stop-color="#7CBAF8"/><stop offset="0.5" stop-color="#6A9BE6"/><stop offset="1" stop-color="#4A5DAE"/></linearGradient>
</defs>
<g transform="translate(35.2 31.7)">
<g transform="rotate(-41)"><rect x="-32.5" y="-11" width="65" height="22" rx="6" fill="url(#gB)"/></g>
<g transform="rotate(41)"><rect x="-32.5" y="-11" width="65" height="22" rx="6" fill="url(#gA)"/></g>
<g transform="rotate(41)"><rect x="-32.5" y="-11" width="43" height="22" rx="6" fill="url(#gC)"/></g>
<g transform="rotate(41)"><rect x="-32.5" y="0" width="17" height="11" rx="5.5" fill="url(#gF)"/></g>
<g transform="rotate(221)"><rect x="-32.5" y="0" width="17" height="11" rx="5.5" fill="url(#gF)"/></g>
<g transform="rotate(139)"><rect x="-32.5" y="0" width="17" height="11" rx="5.5" fill="url(#gF)"/></g>
<g transform="rotate(-41)"><rect x="-32.5" y="0" width="17" height="11" rx="5.5" fill="url(#gF)"/></g>
</g>
</svg>
<svg style="position:absolute;left:1330px;top:30px" width="180" height="60" viewBox="0 0 180 60">
<g fill="#232F5E">
<path d="M13.1 9.3 H23.4 L33.7 36.6 L43.6 13.6 Q45.6 9.3 50.2 9.3 H54.4 L39.9 47.5 H28.2 Z"/>
<ellipse cx="65.1" cy="33.9" rx="14.8" ry="14.6"/>
<rect x="83.3" y="8.2" width="8.6" height="39.3"/>
<rect x="96.5" y="20.4" width="8.6" height="27.1"/>
<circle cx="101.2" cy="12.2" r="5.1"/>
<path d="M108 20.4 H117.8 L122.8 27.6 L127.7 20.4 H137.5 L127.9 33.8 L137.6 47.5 H127.8 L122.8 40.2 L117.8 47.5 H108 L117.7 33.8 Z"/>
<path fill-rule="evenodd" d="M137 33.9 A15.5 14.6 0 1 0 168 33.9 A15.5 14.6 0 1 0 137 33.9 Z M145.7 33.9 A6.8 6.9 0 1 0 159.3 33.9 A6.8 6.9 0 1 0 145.7 33.9 Z"/>
</g>
<g fill="#FFFFFF">
<path d="M58.8 32.9 A6.5 6.8 0 0 1 71.8 32.9 Z"/>
<path d="M58.9 37.7 H82 V42.2 L72.4 38.6 Q69.5 41.6 65.4 41.6 Q60 41.6 58.9 37.7 Z"/>
</g>
</svg>
</body></html>
